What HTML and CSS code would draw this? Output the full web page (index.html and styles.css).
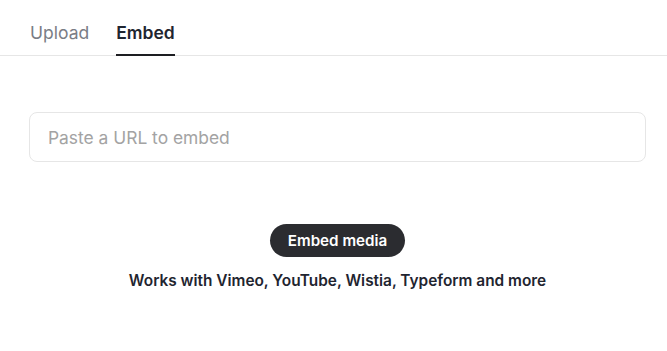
FILE: index.html
```html
<!DOCTYPE html>
<html lang="en">
<head>
    <title>Embed</title>
    <link rel="stylesheet" href="styles.css">
</head>
<body>
    <div class="tabs">
        <div class="tab">Upload</div>
        <div class="tab active">Embed</div>
    </div>
    <div class="panel">
        <input type="text" class="url-input" placeholder="Paste a URL to embed" />
        <div class="actions">
            <button class="embed-btn">Embed media</button>
            <p class="hint">Works with Vimeo, YouTube, Wistia, Typeform and <span class="more">more</span></p>
        </div>
    </div>
</body>
</html>
```

FILE: styles.css
```css
body {
    font-family: Inter, "Noto Sans", sans-serif;
    margin: 0;
    padding: 0;
    background: #ffffff;
    color: #1f2530;
}

.tabs {
    display: flex;
    gap: 27px;
    padding: 0 30px;
    border-bottom: 1px solid #e6e6e6;
}

.tab {
    font-size: 17.5px;
    color: #7a7d85;
    padding: 22px 0 10px;
    line-height: 22px;
    border-bottom: 2px solid transparent;
    margin-bottom: -1px;
}

.tab.active {
    color: #1f2530;
    font-weight: 600;
    border-bottom-color: #1d1e22;
}

.panel {
    padding: 56px 21px 0 29px;
}

.url-input {
    display: block;
    box-sizing: border-box;
    width: 100%;
    height: 50px;
    padding: 0 18px;
    border: 1px solid #e6e6e6;
    border-radius: 8px;
    font-family: inherit;
    font-size: 17.4px;
    outline: none;
}

.url-input::placeholder {
    color: #a3a3a3;
}

.actions {
    display: flex;
    flex-direction: column;
    align-items: center;
    margin-top: 62px;
}

.embed-btn {
    height: 33px;
    padding: 0 18px;
    border: none;
    border-radius: 17px;
    background: #2b2c30;
    color: #ffffff;
    font-family: inherit;
    font-size: 15.2px;
    font-weight: 600;
}

.hint {
    margin: 14px 0 0;
    font-size: 15.4px;
    font-weight: 600;
    line-height: 20px;
}

.more {
    text-decoration: underline dotted #d8d8d8;
    text-underline-offset: 8px;
}
```
